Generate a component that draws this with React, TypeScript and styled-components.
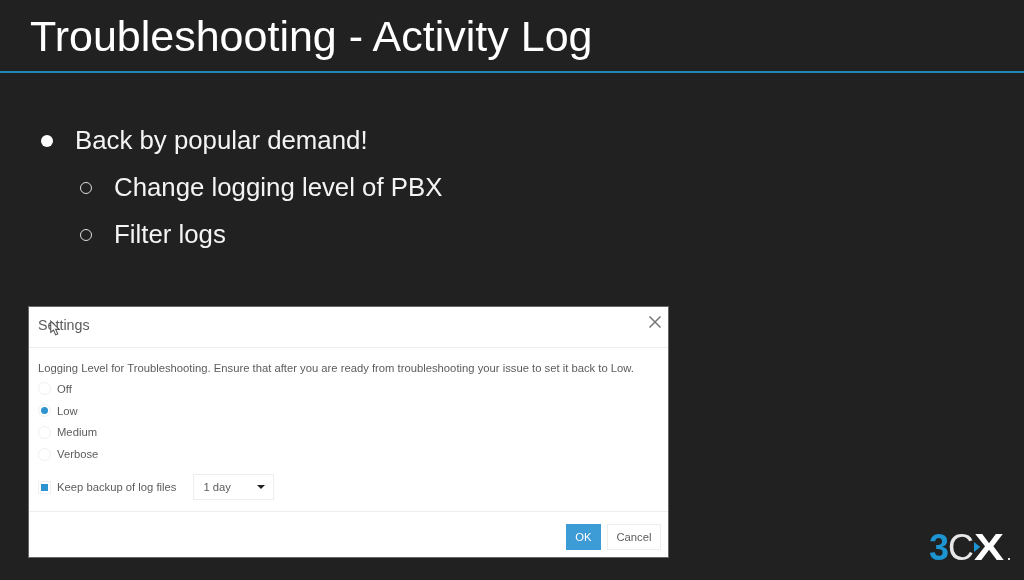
import React from "react";
import styled, { createGlobalStyle } from "styled-components";

const Global = createGlobalStyle`
  html, body { margin: 0; padding: 0; background: #212121; }
  body { font-family: "Liberation Sans", Arial, sans-serif; }
`;

const Slide = styled.div`
  width: 1024px;
  height: 580px;
  overflow: hidden;
  background: #212121;
  display: flex;
  flex-direction: column;
  position: relative;
`;

const Header = styled.header`
  box-sizing: border-box;
  border-bottom: 2px solid #1f86b8;
  height: 73px;
  padding: 11px 0 0 30px;
  flex: none;
`;

const Title = styled.h1`
  margin: 0;
  font-size: 43px;
  line-height: 50px;
  font-weight: 400;
  color: #fff;
  filter: blur(0.4px);
`;

const Bullets = styled.ul`
  list-style: none;
  margin: 0;
  padding: 44px 0 0 0;
  height: 190px;
  flex: none;
  color: #f4f4f4;
  font-size: 25.8px;
  filter: blur(0.4px);
`;

const Bullet = styled.li<{ $level: number }>`
  display: flex;
  align-items: center;
  height: 47px;
  padding-left: ${(p) => (p.$level === 0 ? 41 : 80)}px;
`;

const Mark = styled.span<{ $hollow: boolean }>`
  width: 12px;
  height: 12px;
  box-sizing: border-box;
  border-radius: 50%;
  margin-right: 22px;
  background: ${(p) => (p.$hollow ? "transparent" : "#fff")};
  border: ${(p) => (p.$hollow ? "1.5px solid #ddd" : "none")};
`;

const Dialog = styled.section`
  width: 639px;
  height: 250px;
  margin: 0 0 0 29px;
  background: #fff;
  display: flex;
  flex-direction: column;
  color: #5c5c5c;
  position: relative;
  box-shadow: 0 0 0 1px #666;
  filter: blur(0.5px);
`;

const DialogHead = styled.div`
  height: 41px;
  border-bottom: 1px solid #eee;
  display: flex;
  justify-content: space-between;
  padding: 8px 7px 0 9px;
  box-sizing: border-box;
  flex: none;
`;

const DialogTitle = styled.div`
  font-size: 14.3px;
  line-height: 20px;
`;

const CloseIcon = styled.svg`
  margin-top: 1px;
`;

const DialogBody = styled.div`
  flex: 1;
  padding: 13px 9px 0;
  font-size: 11.25px;
`;

const Intro = styled.div`
  line-height: 14px;
  margin-bottom: 3px;
  white-space: nowrap;
`;

const RadioRow = styled.label`
  display: flex;
  align-items: center;
  height: 21.8px;
  gap: 6px;
`;

const Radio = styled.span<{ $on?: boolean }>`
  width: 13px;
  height: 13px;
  box-sizing: border-box;
  border-radius: 50%;
  border: 1px solid #f0f0f0;
  display: flex;
  align-items: center;
  justify-content: center;
  &::after {
    content: "";
    width: 7px;
    height: 7px;
    border-radius: 50%;
    background: ${(p) => (p.$on ? "#2f93d0" : "transparent")};
  }
`;

const BackupRow = styled.div`
  display: flex;
  align-items: center;
  height: 26px;
  margin-top: 9px;
`;

const Check = styled.span`
  width: 13px;
  height: 13px;
  box-sizing: border-box;
  border: 1px solid #f0f0f0;
  display: flex;
  align-items: center;
  justify-content: center;
  margin-right: 6px;
  &::after {
    content: "";
    width: 7px;
    height: 7px;
    background: #2f93d0;
  }
`;

const Select = styled.div`
  margin-left: 17px;
  width: 81px;
  height: 26px;
  box-sizing: border-box;
  border: 1px solid #eee;
  display: flex;
  align-items: center;
  justify-content: space-between;
  padding: 0 8px 0 9px;
`;

const Caret = styled.span`
  width: 0;
  height: 0;
  border-left: 4.5px solid transparent;
  border-right: 4.5px solid transparent;
  border-top: 4.5px solid #222;
`;

const DialogFoot = styled.div`
  height: 46px;
  flex: none;
  border-top: 1px solid #eee;
  display: flex;
  align-items: flex-start;
  justify-content: flex-end;
  gap: 6px;
  padding: 12px 7px 0 0;
  box-sizing: border-box;
`;

const Button = styled.div<{ $primary?: boolean }>`
  height: 26px;
  box-sizing: border-box;
  display: flex;
  align-items: center;
  justify-content: center;
  font-size: 11.25px;
  width: ${(p) => (p.$primary ? 35 : 54)}px;
  background: ${(p) => (p.$primary ? "#3d9bd5" : "#fff")};
  color: ${(p) => (p.$primary ? "#fff" : "#5c5c5c")};
  border: 1px solid ${(p) => (p.$primary ? "#3d9bd5" : "#eee")};
`;

const Cursor = styled.svg`
  position: absolute;
  left: 20px;
  top: 13px;
`;

const Logo = styled.div`
  position: absolute;
  left: 929px;
  top: 534px;
  height: 27px;
  display: flex;
  align-items: center;
  filter: blur(0.3px);
  font-size: 36px;
  line-height: 27px;
  white-space: nowrap;
  &::after {
    content: "";
    position: absolute;
    left: 79px;
    top: 24px;
    width: 2px;
    height: 2px;
    background: #ddd;
  }
`;

const LogoThree = styled.span`
  color: #1d95d2;
  font-weight: 700;
`;

const LogoC = styled.span`
  color: #e8e8e8;
  font-weight: 400;
  margin-left: -1px;
`;

const LogoX = styled.span`
  color: #fff;
  font-weight: 700;
  margin-left: 0;
  position: relative;
  display: inline-block;
  transform: scaleX(1.25);
  transform-origin: left center;
  &::before {
    content: "";
    position: absolute;
    left: 0;
    top: 8px;
    border-left: 5px solid #1d95d2;
    border-top: 5px solid transparent;
    border-bottom: 5px solid transparent;
  }
`;

const levels = ["Off", "Low", "Medium", "Verbose"];

export default function App() {
  return (
    <Slide>
      <Global />
      <Header>
        <Title>Troubleshooting - Activity Log</Title>
      </Header>
      <Bullets>
        <Bullet $level={0}>
          <Mark $hollow={false} />
          Back by popular demand!
        </Bullet>
        <Bullet $level={1}>
          <Mark $hollow />
          Change logging level of PBX
        </Bullet>
        <Bullet $level={1}>
          <Mark $hollow />
          Filter logs
        </Bullet>
      </Bullets>
      <Dialog>
        <DialogHead>
          <DialogTitle>Settings</DialogTitle>
          <CloseIcon width="12" height="12" viewBox="0 0 12 12">
            <path d="M0.5 0.5L11.5 11.5M11.5 0.5L0.5 11.5" stroke="#777" strokeWidth="1.5" fill="none" />
          </CloseIcon>
        </DialogHead>
        <DialogBody>
          <Intro>
            Logging Level for Troubleshooting. Ensure that after you are ready from troubleshooting your issue to set it back to Low.
          </Intro>
          {levels.map((l) => (
            <RadioRow key={l}>
              <Radio $on={l === "Low"} />
              {l}
            </RadioRow>
          ))}
          <BackupRow>
            <Check />
            Keep backup of log files
            <Select>
              1 day
              <Caret />
            </Select>
          </BackupRow>
        </DialogBody>
        <DialogFoot>
          <Button $primary>OK</Button>
          <Button>Cancel</Button>
        </DialogFoot>
        <Cursor width="12" height="16" viewBox="0 0 10 15">
          <path d="M1 1L1 11.5L3.6 9.4L5.6 14L7.6 13.2L5.6 8.8L9 8.8Z" fill="#fff" stroke="#555" strokeWidth="1" />
        </Cursor>
      </Dialog>
      <Logo>
        <LogoThree>3</LogoThree>
        <LogoC>C</LogoC>
        <LogoX>X</LogoX>
      </Logo>
    </Slide>
  );
}
